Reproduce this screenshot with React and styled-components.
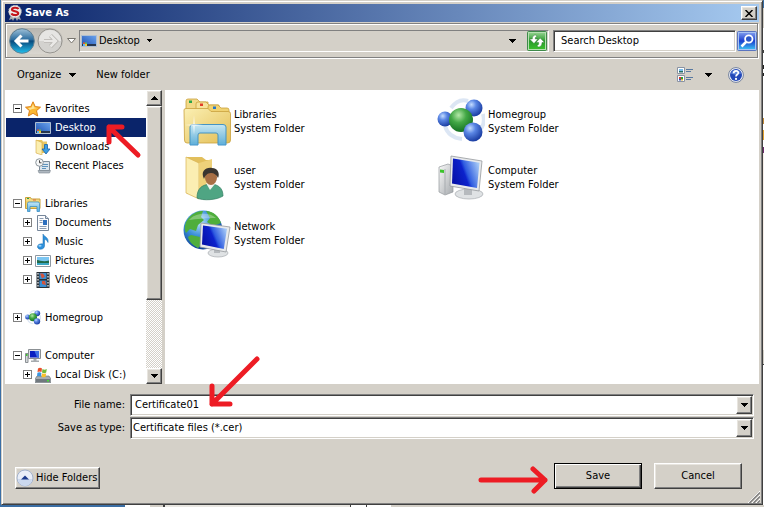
import React, { useState } from 'react';
import styled, { createGlobalStyle, css } from 'styled-components';

const GlobalStyles = createGlobalStyle`
* {
  box-sizing: border-box;
}
body {
  margin: 0;
  background: #3a6ea5;
}
body, button, input, select {
  font-family: "DejaVu Sans Condensed", Tahoma, "DejaVu Sans", sans-serif;
  font-size: 11px;
  line-height: 14px;
  color: #000;
}
`;

const raised = css`
  border: 1px solid;
  border-color: #fff #404040 #404040 #fff;
  box-shadow: inset -1px -1px #808080, inset 1px 1px #e8e5df;
  background: #d4d0c8;
`;

const sunken = css`
  border: 1px solid;
  border-color: #808080 #fff #fff #808080;
  box-shadow: inset 1px 1px #404040, inset -1px -1px #d4d0c8;
  background: #fff;
`;

const Page = styled.div`
  height: 100vh;
  min-height: 400px;
  display: flex;
  padding: 0 1px 2px;
  background:
    linear-gradient(90deg, #3a6ea5 125px, #fff 125px 150px, #d4d0c8 150px 163px, #404040 163px 165px, #e8e6e1 165px 350px, #404040 350px 351px, #fff 351px 366px, #404040 366px 367px, #fff 367px 391px, #d4d0c8 391px) bottom / 100% 2px no-repeat,
    linear-gradient(#3a6ea5 8px, #d4d0c8 8px 28px, #fff 28px 50px, #404040 50px 53px, #fff 53px 65px, #222 65px 69px, #fff 69px 73px, #222 73px 76px, #fff 76px 118px, #c08a3a 118px 124px, #fff 124px 130px, #e0a030 130px 140px, #fff 140px 147px, #6b2a6b 147px 153px, #f6eee8 153px 350px, #d4d0c8 350px 364px, #404040 364px 365px, #fff 365px) right / 1px 100% no-repeat,
    #3a6ea5;
`;

const Window = styled.main`
  flex: 1;
  min-width: 0;
  display: flex;
  flex-direction: column;
  padding: 3px;
  border: 1px solid;
  border-color: #d4d0c8 #404040 #404040 #d4d0c8;
  box-shadow: inset 1px 1px #fff, inset -1px -1px #808080;
  background: #d4d0c8;
`;

const TitleBar = styled.header`
  height: 18px;
  flex: none;
  display: flex;
  align-items: center;
  gap: 3px;
  padding: 0 2px 0 3px;
  background: linear-gradient(90deg, #0a246a, #a6caf0);
`;

const Title = styled.h1`
  flex: 1;
  margin: 0;
  font-size: 11px;
  line-height: 14px;
  color: #fff;
`;

const CloseButton = styled.button`
  ${raised}
  width: 16px;
  height: 14px;
  padding: 0;
  display: grid;
  place-items: center;
`;

const NavBar = styled.nav`
  height: 35px;
  flex: none;
  display: flex;
  align-items: center;
  margin: 1px 1px 1px 0;
  padding: 0 0 0 3px;
  border: 1px solid #808080;
  box-shadow: inset 1px 1px #fff, 1px 1px #fff;
`;

const PlainButton = styled.button`
  border: none;
  background: none;
  padding: 0;
  display: flex;
  align-items: center;
  gap: ${(props) => props.$gap || 0}px;
`;

const TravelButtons = styled.div`
  display: flex;
  align-items: center;
  gap: 2px;
  border-radius: 13px;
  background: linear-gradient(#b9b6b0, #d9d6d0);
`;

const HistoryButton = styled(PlainButton)`
  width: 16px;
  justify-content: center;
`;

const AddressBar = styled.div`
  flex: 1;
  height: 22px;
  display: flex;
  align-items: center;
  justify-content: space-between;
  padding: 0 1px;
  border: 1px solid;
  border-color: #808080 #fff #fff #808080;
`;

const AddressActions = styled.div`
  display: flex;
  align-items: center;
  gap: 11px;
`;

const SearchInput = styled.input`
  ${sunken}
  width: 183px;
  height: 22px;
  margin: 0 1px 0 4px;
  padding: 0 7px;
  outline: none;
  border-radius: 0;

  &::placeholder {
    color: #000;
    opacity: 1;
  }
`;

const Toolbar = styled.div`
  height: 31px;
  flex: none;
  display: flex;
  align-items: center;
  gap: 20px;
  padding: 0 15px 0 12px;
`;

const ToolbarTools = styled.div`
  display: flex;
  align-items: center;
  gap: 16px;
`;

const Spacer = styled.div`
  flex: 1;
`;

const Body = styled.div`
  flex: 1;
  min-height: 0;
  display: flex;
  gap: 3px;
`;

const Sidebar = styled.aside`
  width: 157px;
  flex: none;
  display: flex;
  background: #fff;
`;

const Tree = styled.ul`
  flex: 1;
  margin: 0;
  padding: 9px 0 0 1px;
  list-style: none;
  overflow: hidden;
`;

const TreeRow = styled.li`
  position: relative;
  height: 19px;
  display: flex;
  align-items: center;
  gap: 3px;
  padding-left: ${(props) => (props.$level ? 17 : 7)}px;
  margin-top: ${(props) => (props.$spaced ? 19 : 0)}px;
  white-space: nowrap;
  background: ${(props) => (props.$selected ? '#0a246a' : 'transparent')};
  color: ${(props) => (props.$selected ? '#fff' : '#000')};
`;

const TreeLabel = styled.span`
  display: flex;
  align-items: center;
  gap: 4px;
`;

const Toggle = styled.button`
  width: 9px;
  height: 9px;
  padding: 0;
  border: 1px solid #808080;
  display: grid;
  place-items: center;
  background: #fff;
  visibility: ${(props) => (props.$hidden ? 'hidden' : 'visible')};
`;

const ScrollBar = styled.div`
  width: 16px;
  display: flex;
  flex-direction: column;
  background: repeating-conic-gradient(#d4d0c8 0 25%, #fff 0 50%) 0 0 / 2px 2px;
`;

const ArrowButton = styled.button`
  ${raised}
  width: 16px;
  height: 16px;
  flex: none;
  padding: 0;
  display: grid;
  place-items: center;
`;

const Thumb = styled.div`
  ${raised}
  flex: 193;
`;

const Track = styled.div`
  flex: 69;
`;

const Files = styled.section`
  flex: 1;
  min-width: 0;
  overflow: hidden;
  display: grid;
  grid-template-columns: repeat(auto-fill, 254px);
  grid-auto-rows: 56px;
  align-content: start;
  padding: 4px 0 0 18px;
  background: #fff;
`;

const FileItem = styled.div`
  display: flex;
  align-items: center;
  gap: 3px;
`;

const FileText = styled.div`
  display: flex;
  flex-direction: column;
`;

const Form = styled.form`
  flex: none;
  padding: 10px 5px 0 10px;
`;

const Field = styled.div`
  position: relative;
  display: flex;
  align-items: center;
  gap: 5px;
  margin-bottom: 1px;
`;

const Label = styled.label`
  width: 110px;
  text-align: right;
`;

const Combo = styled.div`
  ${sunken}
  flex: 1;
  height: 22px;
  display: flex;
  align-items: center;
  position: relative;
  padding: 2px;
`;

const NameInput = styled.input`
  flex: 1;
  border: none;
  outline: none;
  padding: 0 2px;
  background: transparent;
`;

const TypeSelect = styled.select`
  flex: 1;
  height: 18px;
  border: none;
  outline: none;
  appearance: none;
  padding: 0;
  background: transparent;
`;

// sits on the right end of the field
const SelectArrow = styled.span`
  ${raised}
  position: absolute;
  right: 1px;
  top: 1px;
  width: 16px;
  height: 18px;
  display: grid;
  place-items: center;
  pointer-events: none;
`;

const Footer = styled.div`
  display: flex;
  align-items: flex-end;
  gap: 12px;
  padding: 23px 12px 12px 0;
`;

const HideButton = styled.button`
  ${raised}
  height: 22px;
  display: flex;
  align-items: center;
  gap: 2px;
  padding: 0 2px 0 0;
`;

const DialogButton = styled.button`
  ${raised}
  width: 88px;
  height: 26px;
  ${(props) => props.$primary && css`
    border-color: #000;
    box-shadow: inset 1px 1px #fff, inset -1px -1px #404040, inset -2px -2px #808080;
  `}
`;

const SaveWrap = styled.div`
  position: relative;
`;

const Pointer = styled.svg`
  position: absolute;
  z-index: 2;
  left: ${(props) => props.$left}px;
  top: ${(props) => props.$top}px;
  fill: none;
  stroke: #ed1c24;
  stroke-width: 5;
  stroke-linecap: round;
  stroke-linejoin: round;
  pointer-events: none;
`;

const Grip = styled.svg`
  position: absolute;
  right: 4px;
  bottom: 4px;
`;

const Defs = () => (
  <svg width="0" height="0" style={{ position: 'absolute' }} aria-hidden="true">
    <defs>
      <linearGradient id="screen" x1="0" y1=".7" x2="1" y2=".3">
        <stop offset="0" stopColor="#0610a8" />
        <stop offset=".45" stopColor="#0c22cc" />
        <stop offset=".55" stopColor="#2f5ce0" />
        <stop offset="1" stopColor="#a4c8f6" />
      </linearGradient>
      <linearGradient id="folder" x1="0" y1="0" x2="1" y2="1">
        <stop offset="0" stopColor="#fbf0b4" />
        <stop offset="1" stopColor="#e3be55" />
      </linearGradient>
      <linearGradient id="glass" x1="0" y1="0" x2="0" y2="1">
        <stop offset="0" stopColor="#c5e8f8" />
        <stop offset="1" stopColor="#58aede" />
      </linearGradient>
      <linearGradient id="desk" x1="0" y1="1" x2="1" y2="0">
        <stop offset="0" stopColor="#1a4fb0" />
        <stop offset="1" stopColor="#6ca4ee" />
      </linearGradient>
      <radialGradient id="blueBall" cx=".35" cy=".3" r=".7">
        <stop offset="0" stopColor="#c4dcff" />
        <stop offset=".4" stopColor="#5a86e4" />
        <stop offset="1" stopColor="#1c3fa4" />
      </radialGradient>
      <radialGradient id="greenBall" cx=".4" cy=".3" r=".7">
        <stop offset="0" stopColor="#b4e8a8" />
        <stop offset=".45" stopColor="#43a846" />
        <stop offset="1" stopColor="#147022" />
      </radialGradient>
      <radialGradient id="globe" cx=".4" cy=".3" r=".7">
        <stop offset="0" stopColor="#b8e4fb" />
        <stop offset=".5" stopColor="#3a8fd8" />
        <stop offset="1" stopColor="#0d3f94" />
      </radialGradient>
      <linearGradient id="metal" x1="0" y1="0" x2="1" y2="1">
        <stop offset="0" stopColor="#fafafa" />
        <stop offset="1" stopColor="#a4a8ac" />
      </linearGradient>
      <linearGradient id="backFill" x1="0" y1="0" x2="0" y2="1">
        <stop offset="0" stopColor="#9ec0d8" />
        <stop offset=".45" stopColor="#2a6c9e" />
        <stop offset=".5" stopColor="#08497c" />
        <stop offset="1" stopColor="#22c0ee" />
      </linearGradient>
      <linearGradient id="searchFill" x1="0" y1="0" x2="0" y2="1">
        <stop offset="0" stopColor="#8ba6f0" />
        <stop offset=".5" stopColor="#1b3fd0" />
        <stop offset="1" stopColor="#3fd0f6" />
      </linearGradient>
      <linearGradient id="refreshFill" x1="0" y1="0" x2="0" y2="1">
        <stop offset="0" stopColor="#9fd89a" />
        <stop offset=".5" stopColor="#2a9a2c" />
        <stop offset="1" stopColor="#3cc42c" />
      </linearGradient>
    </defs>
  </svg>
);

const Caret = ({ up }) => (
  <svg width="7" height="4" viewBox="0 0 7 4" shapeRendering="crispEdges">
    <path d={up ? 'M0 4h7L3.5 0z' : 'M0 0h7L3.5 4z'} fill="#000" />
  </svg>
);

const SmallCaret = () => (
  <svg width="5" height="3" viewBox="0 0 5 3" shapeRendering="crispEdges">
    <path d="M0 0h5L2.500 3z" fill="#000" />
  </svg>
);

const SealIcon = () => (
  <svg width="14" height="16" viewBox="0 0 14 16">
    <path d="M3 10L1 15l3-1 1 2 2-4 2 4 1-2 3 1-2-5z" fill="#a9aaac" />
    <circle cx="7" cy="6.500" r="6.300" fill="#ecebea" stroke="#b8b8b8" strokeDasharray="2 1" />
    <path d="M10.500 4C9.500 2.200 4 2.300 4 4.600c0 2.200 6.200 1 6.200 3.600 0 2.600-6 2.200-6.700.2" fill="none" stroke="#c4161c" strokeWidth="2.200" />
  </svg>
);

const BackIcon = () => (
  <svg width="26" height="26" viewBox="0 0 26 26">
    <circle cx="13" cy="13" r="12.300" fill="url(#backFill)" stroke="#5f7f92" />
    <path d="M19.500 13H8M12.500 7.500L7 13l5.500 5.500" fill="none" stroke="#fff" strokeWidth="3" />
  </svg>
);

const ForwardIcon = () => (
  <svg width="26" height="26" viewBox="0 0 26 26">
    <circle cx="13" cy="13" r="12" fill="#d3d2cf" stroke="#96948f" />
    <path d="M2 13a11 11 0 0 1 22 0z" fill="#e6e5e3" />
    <path d="M7 13h11M13.500 7.500L19 13l-5.500 5.500" fill="none" stroke="#b3b1ad" strokeWidth="4" />
    <path d="M7 13h11M13.500 7.500L19 13l-5.500 5.500" fill="none" stroke="#e9e8e6" strokeWidth="2.500" />
  </svg>
);

const HistoryCaret = () => (
  <svg width="9" height="6" viewBox="0 0 9 6">
    <path d="M.5.5h8l-4 4.500z" fill="#fff" stroke="#77746e" />
  </svg>
);

const RefreshIcon = () => (
  <svg width="20" height="20" viewBox="0 0 20 20">
    <rect x=".5" y=".5" width="19" height="19" rx="1" fill="url(#refreshFill)" stroke="#3f8a4a" />
    <rect x="1.500" y="1.500" width="17" height="17" fill="none" stroke="#b5e0b0" />
    <path d="M9 4C6 4 5.300 6 5.300 8H2.500L7 12.500 11 8H8.300C8.300 6.500 8.500 5.800 10 5.500zM11 16c3 0 4-2 4-4.500h2.500L13.200 7 9 11.500h2.700c0 1.800 0 2.500-1.700 3z" fill="#fff" stroke="#1d6a22" strokeWidth=".4" />
  </svg>
);

const SearchIcon = () => (
  <svg width="20" height="20" viewBox="0 0 20 20">
    <rect x=".5" y=".5" width="19" height="19" rx="1" fill="url(#searchFill)" stroke="#5a74c0" />
    <rect x="1.500" y="1.500" width="17" height="17" fill="none" stroke="#a9c4f4" />
    <path d="M9.500 10.500L4.500 15.500" stroke="#fff" strokeWidth="2.500" />
    <circle cx="11.800" cy="8" r="3.700" fill="#2b56c8" stroke="#fff" strokeWidth="1.800" />
  </svg>
);

const ViewsIcon = () => (
  <svg width="16" height="16" viewBox="0 0 16 16">
    <path d="M.5.500h7v6h-7zM.5 8.500h7v6h-7z" fill="#fff" stroke="#8a93a3" />
    <path d="M2 2h4v2H2z" fill="#77bdec" />
    <path d="M2 4h4v1.500H2z" fill="#256b62" />
    <path d="M2 10h2v2H2z" fill="#d43d2a" />
    <path d="M4 10h2v2H4z" fill="#2d9c38" />
    <path d="M2 12h2v1.500H2z" fill="#2848c8" />
    <path d="M4 12h2v1.500H4z" fill="#e0b020" />
    <path d="M9 2.500h7M9 4.500h5M9 10.500h7M9 12.500h5" stroke="#5878a0" />
  </svg>
);

const HelpIcon = () => (
  <svg width="16" height="16" viewBox="0 0 16 16">
    <circle cx="8" cy="8" r="7.400" fill="#f0f2f8" stroke="#72809c" />
    <circle cx="8" cy="8" r="6" fill="#2348b8" />
    <path d="M3 6.500a5.300 5.300 0 0 1 10 0C10 8 6 8 3 6.500z" fill="#5f86dc" />
    <path d="M5.700 6.300C5.700 3 10.500 3.200 10.300 6 10.200 7.500 8 7.600 8 9.600" fill="none" stroke="#fff" strokeWidth="1.700" />
    <circle cx="8" cy="11.900" r="1.100" fill="#fff" />
  </svg>
);

const DesktopIcon = () => (
  <svg width="16" height="16" viewBox="0 0 16 16">
    <path d="M.5 2.500h15v11H.5z" fill="url(#desk)" stroke="#aebfd2" />
    <path d="M1 11h14v2H1z" fill="#26364e" />
    <path d="M2 9.500h2v1.500H2z" fill="#e8552a" />
    <path d="M4 9.500h2V11H4z" fill="#69c04a" />
    <path d="M2 11h2v2H2z" fill="#58b4f4" />
    <path d="M4 11h2v2H4z" fill="#f4c53a" />
  </svg>
);

const StarIcon = () => (
  <svg width="16" height="16" viewBox="0 0 16 16">
    <path d="M8 .8l2.200 4.800 5.300.6-4 3.500 1.200 5.300L8 12.300 3.300 15l1.200-5.300-4-3.500 5.300-.6z" fill="#fbb733" stroke="#dd8118" />
    <path d="M8 3l1.300 3.500 3 .5C9 7.500 6 8 4.500 9.500L5 9 3 7l3.500-.5z" fill="#ffe391" />
  </svg>
);

const DownloadsIcon = () => (
  <svg width="16" height="16" viewBox="0 0 16 16">
    <path d="M1 1h6l1 1.500h4V14H1z" fill="#e9c763" />
    <path d="M1 1l6 2.500V16l-6-2z" fill="#fbeeb0" stroke="#d3a841" strokeWidth=".6" />
    <path d="M9.500 5.500h3V10H15l-4 5-4-5h2.500z" fill="#3c9fe4" stroke="#1660a8" strokeWidth=".8" />
  </svg>
);

const RecentIcon = () => (
  <svg width="16" height="16" viewBox="0 0 16 16">
    <path d="M4.500 3.500h10v9h-10z" fill="#dce6ee" stroke="#7d8b98" />
    <path d="M8 6.500h5M7 8.500h6M7 10.500h4" stroke="#5f93bd" />
    <path d="M3 12.500h12.500l-1 2.500H4z" fill="#aeb7bf" stroke="#7d8891" strokeWidth=".6" />
    <circle cx="4.500" cy="4.500" r="3.800" fill="#f7f8f8" stroke="#8c959c" />
    <path d="M4.500 2.300v2.500h2" fill="none" stroke="#444" />
  </svg>
);

const LibrariesIcon = ({ size }) => (
  <svg width={size} height={size} viewBox="0 0 48 48">
    <g stroke="#c9a13d" strokeWidth=".8">
      <path d="M3 3q0-2 2-2h9l3 3h8v30H3z" fill="#f2d987" />
      <path d="M13 6q0-2 2-2h8l3 3h10v30H13z" fill="#f6e39a" />
      <path d="M25 9q0-2 2-2h8l3 3h6q2 0 2 2v30H25z" fill="#f0d272" />
      <path d="M1 12q0-1.500 2-1.500h22l3 3h17q2.500 0 2.500 2V42q0 3-3 3H4q-2.500 0-2.500-3z" fill="url(#folder)" />
    </g>
    <path d="M6 2.500h3v2.500H6z" fill="#2aa44a" />
    <path d="M17 5.500h3V8h-3z" fill="#e23d28" />
    <path d="M30 8.500h3V11h-3z" fill="#2577c9" />
    <path d="M7 29q0-2.500 3-2.500h30q3 0 3 2.500v18h-8V37q0-2-2-2H17q-2 0-2 2v10H7z" fill="url(#glass)" stroke="#3d91c6" opacity=".95" />
    <path d="M11 17l-1 9-8 1 8 1 1 9 1-9 8-1-8-1z" fill="#fff" opacity=".6" />
  </svg>
);

const SmallLibrariesIcon = () => (
  <svg width="16" height="16" viewBox="0 0 16 16">
    <path d="M.5 1.500h5l1 1.500h8.500v9.500H.5z" fill="#f4dc86" stroke="#c9a13d" />
    <path d="M1 5h14v7H1z" fill="#f0cf69" />
    <path d="M2 2h2v1H2z" fill="#2aa44a" />
    <path d="M8 3.500h3v1H8z" fill="#e0643a" />
    <path d="M2.500 7.500Q2.500 6 4 6h9q1.500 0 1.500 1.500v8H12v-5H5v5H2.500z" fill="url(#glass)" stroke="#3d91c6" strokeWidth=".8" />
  </svg>
);

const DocumentIcon = () => (
  <svg width="16" height="16" viewBox="0 0 16 16">
    <path d="M2.500.5h8l3 3v12h-11z" fill="#fdfdfe" stroke="#76869a" />
    <path d="M10.500.5v3h3" fill="#d4dce6" stroke="#76869a" />
    <path d="M4.500 3.500h4M4.500 5.500h3M4.500 7.500h3M4.500 11.500h7M4.500 13.500h7" stroke="#8c9db2" />
    <path d="M8 5h4v5H8z" fill="#2d6fbe" />
  </svg>
);

const MusicIcon = () => (
  <svg width="16" height="16" viewBox="0 0 16 16">
    <path d="M8 0c1 3 6 3 5 8.500C12 6 10.500 5.500 9.500 5.500V12C9 16.500 2 16 2.500 12.300 3 10 6 9.500 8 10z" fill="#2e91dc" stroke="#176aac" strokeWidth=".5" />
    <ellipse cx="5" cy="11.800" rx="1.600" ry="1" fill="#9bd4fa" />
  </svg>
);

const PicturesIcon = () => (
  <svg width="16" height="16" viewBox="0 0 16 16">
    <path d="M.5 2.500h15v11H.5z" fill="#fff" stroke="#8e98a2" />
    <path d="M2 4h12v8H2z" fill="#7cc6f2" />
    <path d="M2 7c3 0 6 2.500 12 .5V10H2z" fill="#1f6a4a" />
    <path d="M2 10h12v2H2z" fill="#3aa6c4" />
  </svg>
);

const VideosIcon = () => (
  <svg width="16" height="16" viewBox="0 0 16 16">
    <path d="M1.500 0h13v16h-13z" fill="#2b3238" />
    <path d="M4.500 1h7v6h-7zM4.500 8.500h7V15h-7z" fill="#3a8fd4" />
    <path d="M5 1.500h3l2 3-3 2zM7 9h3l1 4-4-1z" fill="#d4543c" />
    <path d="M3 1v14M13 1v14" stroke="#e6eaee" strokeWidth="1.300" strokeDasharray="1.500 1.500" />
  </svg>
);

const HomegroupIcon = ({ size = 16 }) => (
  <svg width={size} height={size} viewBox="0 0 48 48">
    <path d="M14 10C19 3 25 1 31 3M46 16c2 7 1 12-4 17M8 28c2 7 8 12 17 13" fill="none" stroke="#c4d6ec" strokeWidth="4" opacity=".6" />
    <circle cx="37" cy="10" r="8.500" fill="url(#blueBall)" />
    <circle cx="8" cy="21" r="7.500" fill="url(#blueBall)" />
    <circle cx="24" cy="22" r="12" fill="url(#greenBall)" />
    <circle cx="36" cy="34" r="9.500" fill="url(#blueBall)" />
  </svg>
);

const ComputerIcon = ({ size }) => (
  <svg width={size} height={size} viewBox="0 0 48 48">
    <path d="M2 13l9-3 5 2v26l-8 3-6-3z" fill="url(#metal)" stroke="#94989c" strokeWidth=".7" />
    <path d="M8 15v25" stroke="#a8acb0" />
    <path d="M3 15.500l4 .6v3l-4-.6z" fill="#3cc42c" />
    <ellipse cx="32" cy="40" rx="14" ry="5" fill="#dfe2e4" stroke="#a8acb0" strokeWidth=".7" />
    <path d="M27 32l8 2v7h-8z" fill="#b6babe" />
    <path d="M14 2l31 5-3 30-29-5z" fill="#e8eaec" stroke="#95999d" strokeWidth=".8" />
    <path d="M16 4.500l26.500 4.200L40 34l-25-4.500z" fill="url(#screen)" />
  </svg>
);

const SmallComputerIcon = () => (
  <svg width="16" height="16" viewBox="0 0 16 16">
    <path d="M.5 5.500h2.500v9H.5z" fill="#d5d8da" stroke="#8b9094" />
    <path d="M1 6h1.500v2H1z" fill="#3cc42c" />
    <path d="M3.500 1.500h12v9h-12z" fill="#dfe2e6" stroke="#8b9094" />
    <path d="M5 3h9v6.500H5z" fill="#0a1fc0" />
    <path d="M9.500 3H14v6.500h-2z" fill="#3d6fe4" />
    <path d="M8.500 11h3v1.500H14V14H6v-1.500h2.500z" fill="#a6abaf" />
  </svg>
);

const DiskIcon = () => (
  <svg width="16" height="16" viewBox="0 0 16 16">
    <path d="M2 9h12l2 3v3.500H0V12z" fill="#a6adb2" stroke="#646b70" strokeWidth=".6" />
    <path d="M1 12h14v3H1z" fill="#70787e" />
    <path d="M12 13h2v1.500h-2z" fill="#46e03a" />
    <path d="M3 1.500q2-1.500 4 0L6.500 5q-2-1-4 0z" fill="#e8502c" />
    <path d="M7.500 2q2 1.300 4.300 0l-.6 3.600q-2 1.200-4.200 0z" fill="#74b83a" />
    <path d="M2.400 5.700q2-1 4 .2L6 9.500q-2-1-4-.2z" fill="#3c96e0" />
    <path d="M7 6.300q2 1 4.200 0l-.6 3.400q-2 1-4 0z" fill="#fac02c" />
  </svg>
);

const UserIcon = ({ size }) => (
  <svg width={size} height={size} viewBox="0 0 48 48">
    <path d="M4 3h15l4 3h6v34H4z" fill="#e2bf5c" />
    <path d="M3 3l13 6v36L3 39z" fill="#fbeeb2" stroke="#d8b252" strokeWidth=".7" />
    <path d="M16 9l13-4v35l-13 4z" fill="#eed17a" />
    <path d="M14 44c0-9 4-13 13-14 8 0 13 4 13 12-6 4-20 5-26 2z" fill="#4fa583" stroke="#2f7d60" strokeWidth=".7" />
    <path d="M23 29l4 7 5-6z" fill="#f4f4ee" />
    <ellipse cx="28" cy="23.500" rx="6" ry="7.500" fill="#a86f45" />
    <path d="M21 25c-4-8 2-12 8-11 6 0 8 6 6 10-1-3-4-5-7-5-4 0-6 3-7 6z" fill="#3a3530" />
  </svg>
);

const NetworkIcon = ({ size }) => (
  <svg width={size} height={size} viewBox="0 0 48 48">
    <circle cx="20" cy="20" r="19.500" fill="url(#globe)" />
    <path d="M3 12C8 3 15 1 20 1l-2 6 3 3-6 5-2 6-6-2-4 4c-2-4-1-8 0-11zM23 1c7 0 13 5 15 12l-8 3-6-4 3-4zM8 25l9 2 3 6-5 5C9 35 6 31 5 27z" fill="#4fae3c" />
    <path d="M6 10C11 3 26 1 33 8 25 8 12 9 6 10z" fill="#fff" opacity=".3" />
    <ellipse cx="35" cy="43" rx="10" ry="4" fill="#dfe2e4" stroke="#a8acb0" strokeWidth=".7" />
    <path d="M31 37h6v6h-6z" fill="#b6babe" />
    <path d="M18 13l29 4-4 25-26-5z" fill="#e8eaec" stroke="#95999d" strokeWidth=".8" />
    <path d="M20 15.500l24 3.300L40.800 39 19 34.500z" fill="url(#screen)" />
  </svg>
);

const HideIcon = () => (
  <svg width="18" height="18" viewBox="0 0 18 18">
    <circle cx="9" cy="9" r="8" fill="#e9eef8" stroke="#a3b2cc" />
    <path d="M2 10h14a7 7 0 0 1-14 0z" fill="#cbd8ee" />
    <path d="M5 10.500h8L9 6.500z" fill="#1b3a8c" />
  </svg>
);

const tree = [
  { name: 'Favorites', icon: <StarIcon />, level: 0, open: true },
  { name: 'Desktop', icon: <DesktopIcon />, level: 1, leaf: true },
  { name: 'Downloads', icon: <DownloadsIcon />, level: 1, leaf: true },
  { name: 'Recent Places', icon: <RecentIcon />, level: 1, leaf: true },
  { name: 'Libraries', icon: <SmallLibrariesIcon />, level: 0, open: true, spaced: true },
  { name: 'Documents', icon: <DocumentIcon />, level: 1 },
  { name: 'Music', icon: <MusicIcon />, level: 1 },
  { name: 'Pictures', icon: <PicturesIcon />, level: 1 },
  { name: 'Videos', icon: <VideosIcon />, level: 1 },
  { name: 'Homegroup', icon: <HomegroupIcon />, level: 0, spaced: true },
  { name: 'Computer', icon: <SmallComputerIcon />, level: 0, open: true, spaced: true },
  { name: 'Local Disk (C:)', icon: <DiskIcon />, level: 1 },
];

const folders = [
  { name: 'Libraries', Icon: LibrariesIcon },
  { name: 'Homegroup', Icon: HomegroupIcon },
  { name: 'user', Icon: UserIcon },
  { name: 'Computer', Icon: ComputerIcon },
  { name: 'Network', Icon: NetworkIcon },
];

const App = () => {
  const [selected, setSelected] = useState('Desktop');
  const [fileName, setFileName] = useState('Certificate01');

  return (
    <>
      <GlobalStyles />
      <Defs />
      <Page>
        <Window>
          <TitleBar>
            <SealIcon />
            <Title>Save As</Title>
            <CloseButton aria-label="Close">
              <svg width="8" height="7" viewBox="0 0 8 7">
                <path d="M.5 0l7 7M7.500 0l-7 7" stroke="#000" strokeWidth="1.500" />
              </svg>
            </CloseButton>
          </TitleBar>

          <NavBar>
            <TravelButtons>
              <PlainButton aria-label="Back"><BackIcon /></PlainButton>
              <PlainButton aria-label="Forward"><ForwardIcon /></PlainButton>
            </TravelButtons>
            <HistoryButton aria-label="Recent pages"><HistoryCaret /></HistoryButton>
            <AddressBar>
              <PlainButton $gap={2}>
                <DesktopIcon />
                Desktop
                <HistoryButton as="span"><SmallCaret /></HistoryButton>
              </PlainButton>
              <AddressActions>
                <PlainButton aria-label="Previous locations"><Caret /></PlainButton>
                <PlainButton aria-label="Refresh"><RefreshIcon /></PlainButton>
              </AddressActions>
            </AddressBar>
            <SearchInput aria-label="Search Desktop" placeholder="Search Desktop" />
            <PlainButton aria-label="Search"><SearchIcon /></PlainButton>
          </NavBar>

          <Toolbar>
            <PlainButton $gap={8}>Organize <Caret /></PlainButton>
            <PlainButton>New folder</PlainButton>
            <Spacer />
            <ToolbarTools>
              <PlainButton $gap={12} aria-label="Change view"><ViewsIcon /><Caret /></PlainButton>
              <PlainButton aria-label="Help"><HelpIcon /></PlainButton>
            </ToolbarTools>
          </Toolbar>

          <Body>
            <Sidebar>
              <Tree>
                {tree.map((node) => (
                  <TreeRow
                    key={node.name}
                    $level={node.level}
                    $spaced={node.spaced}
                    $selected={node.name === selected}
                    onClick={() => setSelected(node.name)}
                  >
                    <Toggle $hidden={node.leaf} aria-label={node.name}>
                      <svg width="5" height="5" viewBox="0 0 5 5" shapeRendering="crispEdges">
                        <path d={node.open ? 'M0 2h5v1H0z' : 'M0 2h5v1H0zM2 0h1v5H2z'} fill="#000" />
                      </svg>
                    </Toggle>
                    <TreeLabel>{node.icon}{node.name}</TreeLabel>
                    {node.name === 'Desktop' && (
                      <Pointer $left={98} $top={4} width="40" height="40">
                        <path d="M5 5L34 33M5 5h13M5 5v15" />
                      </Pointer>
                    )}
                  </TreeRow>
                ))}
              </Tree>
              <ScrollBar>
                <ArrowButton aria-label="Scroll up"><Caret up /></ArrowButton>
                <Thumb />
                <Track />
                <ArrowButton aria-label="Scroll down"><Caret /></ArrowButton>
              </ScrollBar>
            </Sidebar>
            <Files>
              {folders.map(({ name, Icon }) => (
                <FileItem key={name}>
                  <Icon size={48} />
                  <FileText>
                    <span>{name}</span>
                    <span>System Folder</span>
                  </FileText>
                </FileItem>
              ))}
            </Files>
          </Body>

          <Form onSubmit={(e) => e.preventDefault()}>
            <Field>
              <Label htmlFor="file-name">File name:</Label>
              <Combo>
                <NameInput id="file-name" value={fileName} onChange={(e) => setFileName(e.target.value)} />
                <SelectArrow><Caret /></SelectArrow>
              </Combo>
              <Pointer $left={190} $top={-40} width="60" height="60">
                <path d="M52 5L7 50M7 50V32M7 50h18" />
              </Pointer>
            </Field>
            <Field>
              <Label htmlFor="file-type">Save as type:</Label>
              <Combo>
                <TypeSelect id="file-type">
                  <option>Certificate files (*.cer)</option>
                </TypeSelect>
                <SelectArrow><Caret /></SelectArrow>
              </Combo>
            </Field>
            <Footer>
              <HideButton type="button"><HideIcon />Hide Folders</HideButton>
              <Spacer />
              <SaveWrap>
                <DialogButton $primary type="submit">Save</DialogButton>
                <Pointer $left={-78} $top={1} width="76" height="32">
                  <path d="M5 16h64M57 5l12 11-11 11" />
                </Pointer>
              </SaveWrap>
              <DialogButton type="button">Cancel</DialogButton>
            </Footer>
          </Form>
          <Grip width="12" height="12" viewBox="0 0 12 12">
            <path d="M0 12L12 0M4 12l8-8M8 12l4-4" stroke="#fff" />
            <path d="M1.500 12L12 1.500M5.500 12L12 5.500M9.500 12L12 9.500" stroke="#808080" strokeWidth="1.500" />
          </Grip>
        </Window>
      </Page>
    </>
  );
};

export default App;
